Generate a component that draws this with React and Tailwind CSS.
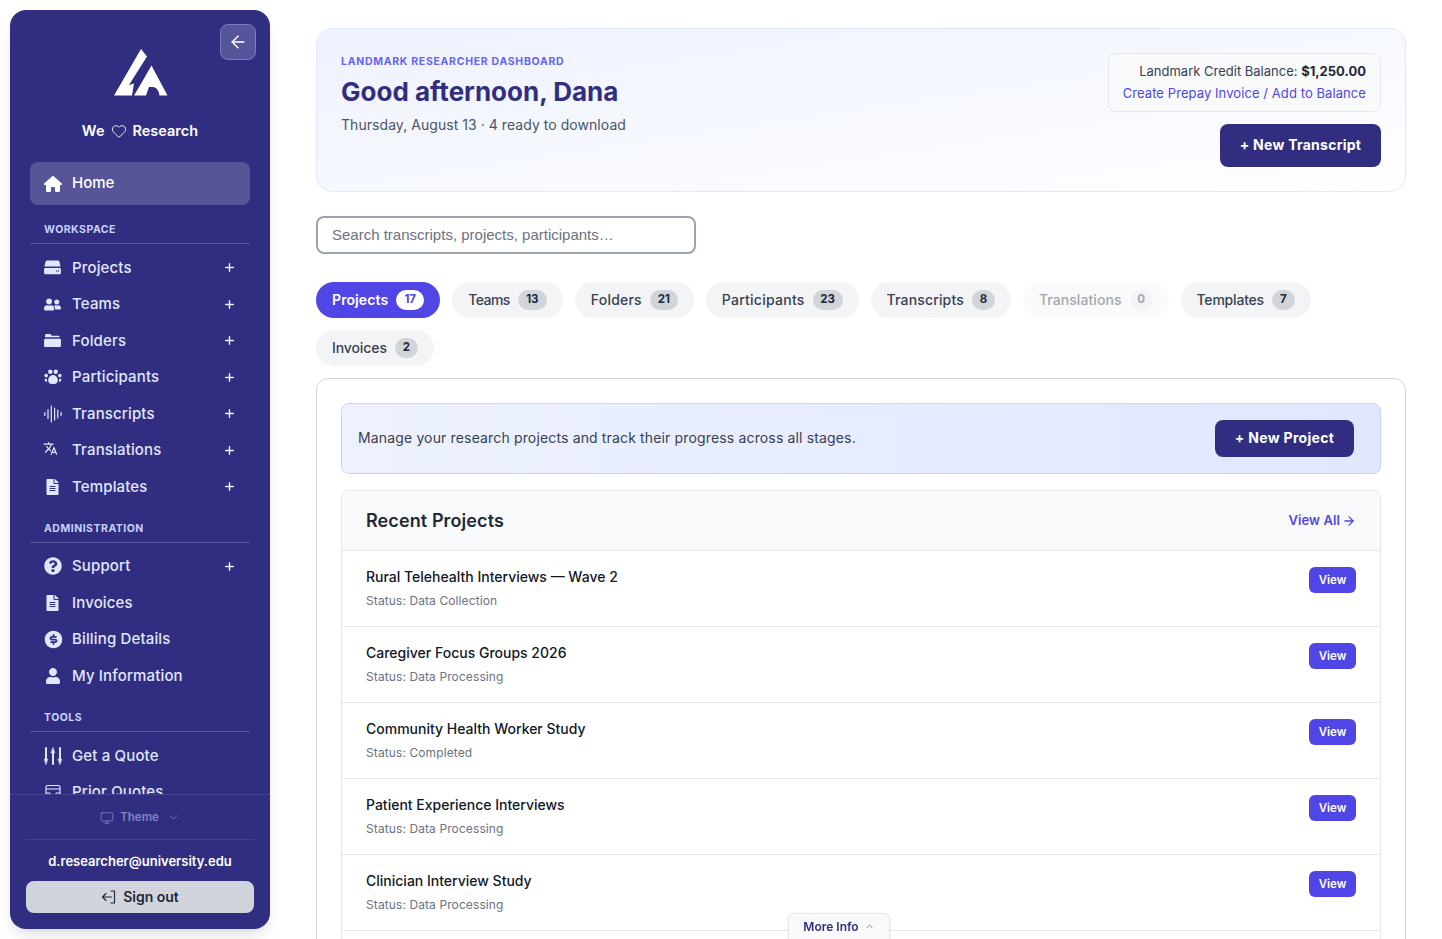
import { ArrowLeft, ChevronDown, ChevronUp, Monitor, Plus, ArrowRight, Heart } from 'lucide-react';
import { FaUserFriends, FaFileAlt, FaQuestionCircle, FaUser } from 'react-icons/fa';
import { FaHouse } from 'react-icons/fa6';
import { MdTranslate } from 'react-icons/md';
import { RiMoneyDollarCircleFill } from 'react-icons/ri';

const DriveIcon = () => (
  <svg viewBox="0 0 18 16" className="w-[17px] h-[15px]" fill="currentColor">
    <path d="M3.5 0.5h11c1 0 1.6.6 2 1.6L17.6 7H.4l1.1-4.9C1.9 1.1 2.5.5 3.5.5Z" />
    <path fillRule="evenodd" d="M1.5 8.5h15c.9 0 1.5.6 1.5 1.5v3.5c0 1-.6 1.6-1.5 1.6h-15C.6 15.1 0 14.5 0 13.5V10c0-.9.6-1.5 1.5-1.5ZM13 11v1.5h1V11Zm2 0v1.5h1V11Z" />
  </svg>
);

const FolderIcon = () => (
  <svg viewBox="0 0 18 16" className="w-[17px] h-[15px]" fill="currentColor">
    <path d="M2 1h4.5l2 2H15c1 0 1.6.6 1.7 1.6H1C1 2 1.2 1 2 1Z" />
    <path d="M1.5 6H17c.6 0 1 .4 1 1v6.5c0 1-.7 1.5-1.5 1.5h-15C.7 15 0 14.5 0 13.5V7.5C0 6.600.6 6 1.500 6Z" />
  </svg>
);

const GroupIcon = () => (
  <svg viewBox="0 0 18 16" className="w-[18px] h-[16px]" fill="currentColor">
    <circle cx="6.300" cy="2.800" r="2.200" />
    <circle cx="11.700" cy="2.800" r="2.200" />
    <circle cx="2.200" cy="6.600" r="1.800" />
    <circle cx="15.800" cy="6.600" r="1.800" />
    <path d="M9 6c2.600 0 4.800 2.500 4.800 5.400 0 2.400-1.800 3.600-4.800 3.600s-4.800-1.200-4.800-3.600C4.200 8.500 6.400 6 9 6Z" />
    <path d="M1.500 9.500 3 10.500 3 13 1.200 12.300C.4 11.800.5 10.200 1.500 9.500ZM16.500 9.500 15 10.500 15 13 16.800 12.300C17.600 11.800 17.500 10.200 16.500 9.500Z" />
  </svg>
);

const WaveIcon = () => (
  <svg viewBox="0 0 18 18" className="w-[18px] h-[18px]" fill="none" stroke="currentColor" strokeWidth="1.200" strokeLinecap="round">
    <path d="M.8 7.500v3M4 4.500v9M7.300 1v16M10.600 3v12M13.800 5v8M17.100 7.500v3" />
  </svg>
);

const TranslateIcon = () => <MdTranslate className="w-[15px] h-[15px] -ml-[1px] -mt-[4px]" />;

const FileIcon = () => <FaFileAlt className="w-[13px] h-[16px] ml-[2px]" />;

const BillingIcon = () => <RiMoneyDollarCircleFill className="w-[21px] h-[21px] -ml-[1.500px]" />;

const SupportIcon = () => <FaQuestionCircle className="w-[18px] h-[18px]" />;

const UserIcon = () => <FaUser className="w-[14px] h-[16px] ml-[2px]" />;

const TeamsIcon = () => <FaUserFriends className="w-[17px] h-[15px]" />;

const SlidersIcon = () => (
  <svg viewBox="0 0 18 18" className="w-[18px] h-[18px]" fill="currentColor" stroke="currentColor" strokeWidth="2" strokeLinecap="round">
    <path d="M2 1v12M9 5v12M16 1v12" fill="none" />
    <path d="M.2 12h3.600L2 17.500ZM7.200 6h3.600L9 .5ZM14.200 12h3.600L16 17.500Z" strokeWidth="0.500" />
  </svg>
);

const InboxIcon = () => (
  <svg viewBox="0 0 16 16" className="w-[16px] h-[16px] ml-[1px]" fill="none" stroke="currentColor" strokeWidth="1.200" strokeLinejoin="round">
    <rect x="1" y="1.500" width="14" height="13" rx="1.500" />
    <path d="M1 5h14M1 9h3.500l1.500 2h4l1.500-2H15" />
  </svg>
);

const SignOutIcon = ({ className }) => (
  <svg viewBox="0 0 16 16" className={className} fill="none" stroke="currentColor" strokeWidth="1.200" strokeLinecap="round" strokeLinejoin="round">
    <path d="M10 2h3.500v12H10M10.500 8H1.500M5 4.500 1.500 8 5 11.500" />
  </svg>
);

const Logo = () => (
  <svg viewBox="0 0 55 47" className="w-[55px] h-[47px]" fill="white">
    <path d="M28 0 34 7.500 16 36 21 34.500 19 46.500 1 46.500Z" />
    <path d="M38.500 16.500 54.500 46.500H46.500C46 41.500 43 38 40 38H36L33 46.500H21L29 33Z" />
  </svg>
);

const NavItem = ({ icon: Icon, label, plus }) => (
  <div className="flex items-center h-[36.500px] pl-[14px] pr-[14px] text-[#e0e7ff] text-[15px] font-medium">
    <span className="w-[28px] flex-shrink-0">
      <Icon />
    </span>
    <span className="tracking-[0.150px]">{label}</span>
    {plus && <Plus size={13} strokeWidth={2.600} className="ml-auto text-[#eef2ff]" />}
  </div>
);

const Section = ({ title, listPad = 'pt-[5.500px]', children }) => (
  <div className="mt-[15.500px]">
    <p className="pl-[14px] text-[10.500px] font-bold tracking-[0.500px] text-[#c7d2fe] leading-[16px]">{title}</p>
    <div className={`mt-[5px] border-t border-[#5a5aa8] ${listPad}`}>{children}</div>
  </div>
);

const Sidebar = () => (
  <aside className="relative flex-shrink-0 w-[260px] h-[919px] bg-[#312e81] rounded-2xl shadow-lg flex flex-col overflow-hidden">
    <button className="absolute top-[14px] right-[14px] w-[36px] h-[36px] rounded-lg bg-[#56549a] border border-[#7d7bbd] flex items-center justify-center text-white">
      <ArrowLeft size={20} strokeWidth={1.800} />
    </button>
    <div className="flex-1 min-h-0 overflow-hidden px-[20px]">
      <div className="flex justify-center pt-[39px]">
        <Logo />
      </div>
      <div className="flex items-center justify-center gap-[6px] mt-[25px] h-[20px] text-white text-[14.500px] font-semibold">
        <span>We</span>
        <Heart size={16} strokeWidth={1.300} />
        <span>Research</span>
      </div>
      <div className="mt-[21px] mb-[17px] h-[43px] flex items-center pl-[14px] rounded-lg bg-[#575598] text-white text-[15px] font-medium">
        <span className="w-[28px]"><FaHouse className="w-[18px] h-[16px]" /></span>
        Home
      </div>
      <Section title="WORKSPACE">
        <NavItem icon={DriveIcon} label="Projects" plus />
        <NavItem icon={TeamsIcon} label="Teams" plus />
        <NavItem icon={FolderIcon} label="Folders" plus />
        <NavItem icon={GroupIcon} label="Participants" plus />
        <NavItem icon={WaveIcon} label="Transcripts" plus />
        <NavItem icon={TranslateIcon} label="Translations" plus />
        <NavItem icon={FileIcon} label="Templates" plus />
      </Section>
      <Section title="ADMINISTRATION">
        <NavItem icon={SupportIcon} label="Support" plus />
        <NavItem icon={FileIcon} label="Invoices" />
        <NavItem icon={BillingIcon} label="Billing Details" />
        <NavItem icon={UserIcon} label="My Information" />
      </Section>
      <Section title="TOOLS" listPad="pt-[6px]">
        <NavItem icon={SlidersIcon} label="Get a Quote" />
        <NavItem icon={InboxIcon} label="Prior Quotes" />
      </Section>
    </div>
    <div className="flex-shrink-0 h-[135px] border-t border-[#45438f] px-[16px]">
      <div className="h-[45px] pt-[1px] flex items-center justify-center gap-[6px] text-[#8483bf] text-[11.500px] font-semibold border-b border-[#45438f]">
        <Monitor size={14} strokeWidth={1.400} />
        Theme
        <ChevronDown size={13} strokeWidth={1.400} className="ml-[2px]" />
      </div>
      <p className="mt-[12px] text-center text-white text-[13px] leading-[19px] font-semibold">d.researcher@university.edu</p>
      <button className="mt-[10px] w-full h-[32px] pb-[1px] rounded-lg bg-[#d1d5db] text-[#1f2937] text-[14px] font-semibold flex items-center justify-center gap-[6px]">
        <SignOutIcon className="w-[16px] h-[16px]" />
        Sign out
      </button>
    </div>
  </aside>
);

const tabs = [
  { label: 'Projects', count: 17, active: true, badge: 'w-[28px]', spacing: 'tracking-[0.100px]' },
  { label: 'Teams', count: 13, badge: 'w-[29px]', spacing: 'tracking-[-0.550px]' },
  { label: 'Folders', count: 21, badge: 'w-[28px]', spacing: 'tracking-[0.200px]' },
  { label: 'Participants', count: 23, badge: 'w-[30px]', spacing: 'tracking-[0.250px]' },
  { label: 'Transcripts', count: 8, badge: 'w-[23px]', spacing: 'tracking-[0.150px]' },
  { label: 'Translations', count: 0, disabled: true, badge: 'w-[23px]', spacing: 'tracking-[0.070px]' },
  { label: 'Templates', count: 7, badge: 'w-[23px]', spacing: 'tracking-[-0.200px]' },
  { label: 'Invoices', count: 2, badge: 'w-[23px]', spacing: 'tracking-[-0.100px]' },
];

const Tab = ({ tab }) => {
  const pill = tab.active
    ? 'bg-[#4f46e5] text-white font-semibold'
    : tab.disabled
      ? 'bg-[#f9fafb] text-[#a3a8b1] font-medium'
      : 'bg-[#f3f4f6] text-[#374151] font-medium';
  const badge = tab.active
    ? 'bg-white text-[#4f46e5]'
    : tab.disabled
      ? 'bg-[#f3f4f6] text-[#a3a8b1]'
      : 'bg-[#d1d5db] text-[#1f2937]';
  return (
    <div className={`h-[36px] flex items-center gap-[8px] px-[16px] rounded-full text-[14px] ${tab.spacing} ${pill}`}>
      <span className="pb-[2px]">{tab.label}</span>
      <span className={`h-[20px] flex items-center justify-center rounded-full text-[11.500px] font-bold tracking-normal ${tab.badge} ${badge}`}>{tab.count}</span>
    </div>
  );
};

const projects = [
  { name: 'Rural Telehealth Interviews — Wave 2', status: 'Data Collection' },
  { name: 'Caregiver Focus Groups 2026', status: 'Data Processing' },
  { name: 'Community Health Worker Study', status: 'Completed' },
  { name: 'Patient Experience Interviews', status: 'Data Processing' },
  { name: 'Clinician Interview Study', status: 'Data Processing' },
];

const ProjectRow = ({ project }) => (
  <div className="h-[76px] flex items-start justify-between pt-[16px] px-[24px] border-b border-[#e5e7eb]">
    <div>
      <p className="text-[14px] font-medium text-[#111827] leading-[20px]">{project.name}</p>
      <p className="mt-[6px] text-[12px] tracking-[0.100px] text-[#6b7280] leading-[16px]">Status: {project.status}</p>
    </div>
    <button className="w-[47px] h-[26px] pt-[1px] rounded-md bg-[#4f46e5] text-white text-[11.500px] font-semibold">View</button>
  </div>
);

export default function App() {
  return (
    <div className="h-screen overflow-hidden bg-white flex gap-[46px] pl-[10px] pt-[10px] pr-[36px] text-[#374151] font-['Inter',sans-serif]">
      <Sidebar />
      <main className="flex-1 min-w-0 pt-[18px]">
        {/* Hero */}
        <section className="h-[164px] rounded-2xl border border-[#e0e7ff] bg-gradient-to-br from-[#eef2ff] to-white flex justify-between pl-[24px] pr-[24px] pt-[24px]">
          <div>
            <p className="mt-[1px] text-[10.500px] font-bold tracking-[0.700px] text-[#6366f1] leading-[16px]">LANDMARK RESEARCHER DASHBOARD</p>
            <h1 className="mt-[4px] text-[26px] font-bold text-[#312e81] leading-[36px]">Good afternoon, Dana</h1>
            <p className="mt-[5px] text-[14px] tracking-[0.050px] text-[#4b5563] leading-[20px]">Thursday, August 13 · 4 ready to download</p>
          </div>
          <div className="flex flex-col items-end">
            <div className="w-[273px] h-[59px] rounded-lg border border-[#e5e7eb] bg-[#f8fafc] px-[14px] pb-[2px] flex flex-col justify-center items-end gap-[2px] text-[13px] whitespace-nowrap">
              <p className="text-[#374151] leading-[20px]">Landmark Credit Balance: <b className="text-[#1f2937]">$1,250.00</b></p>
              <p className="text-[#4f46e5] tracking-[0.080px] leading-[20px]">Create Prepay Invoice / Add to Balance</p>
            </div>
            <button className="mt-[12px] w-[161px] h-[43px] pb-[2px] rounded-lg bg-[#312e81] text-white text-[14px] tracking-[0.250px] font-bold">+ New Transcript</button>
          </div>
        </section>

        {/* Search */}
        <input
          className="block mt-[24px] w-[380px] h-[38px] pb-[2px] rounded-lg border-2 border-[#9ca3af] bg-white px-[14px] text-[15px] font-['Liberation_Sans',sans-serif] placeholder:text-[#6b7280] outline-none"
          placeholder="Search transcripts, projects, participants…"
        />

        {/* Tabs */}
        <div className="mt-[28px] flex flex-wrap gap-[12px]">
          {tabs.map((tab) => <Tab key={tab.label} tab={tab} />)}
        </div>

        {/* Panel */}
        <section className="mt-[12px] rounded-xl border border-[#d1d5db] p-[24px] h-[700px]">
          <div className="h-[71px] flex items-center justify-between pl-[16px] pr-[26px] rounded-lg border border-[#c7d2fe] bg-gradient-to-r from-[#eef2ff] to-[#e0e7ff]">
            <p className="pb-[2px] text-[14px] tracking-[0.150px] text-[#374151]">Manage your research projects and track their progress across all stages.</p>
            <button className="w-[139px] h-[37px] pb-[2px] rounded-lg bg-[#312e81] text-white text-[14px] tracking-[0.300px] font-bold">+ New Project</button>
          </div>
          <div className="mt-[16px] rounded-lg border border-[#e5e7eb]">
            <div className="h-[60px] flex items-center justify-between px-[24px] bg-[#f9fafb] border-b border-[#e5e7eb] rounded-t-lg">
              <h2 className="text-[18px] tracking-[0.100px] font-semibold text-[#1f2937]">Recent Projects</h2>
              <span className="flex items-center gap-[2px] text-[13px] tracking-[0.100px] font-semibold text-[#4f46e5]">
                View All <ArrowRight size={14} strokeWidth={2.200} />
              </span>
            </div>
            {projects.map((p) => <ProjectRow key={p.name} project={p} />)}
            <div className="h-[76px]" />
          </div>
        </section>
      </main>

      <div className="fixed bottom-0 left-[788px] w-[102px] h-[26px] rounded-t-md border border-b-0 border-[#e5e7eb] bg-[#f8fafc] shadow-sm flex items-center justify-center gap-[5px] text-[12px] font-semibold text-[#312e81]">
        More Info
        <ChevronUp size={11} strokeWidth={1.800} className="text-[#6b7280]" />
      </div>
    </div>
  );
}
